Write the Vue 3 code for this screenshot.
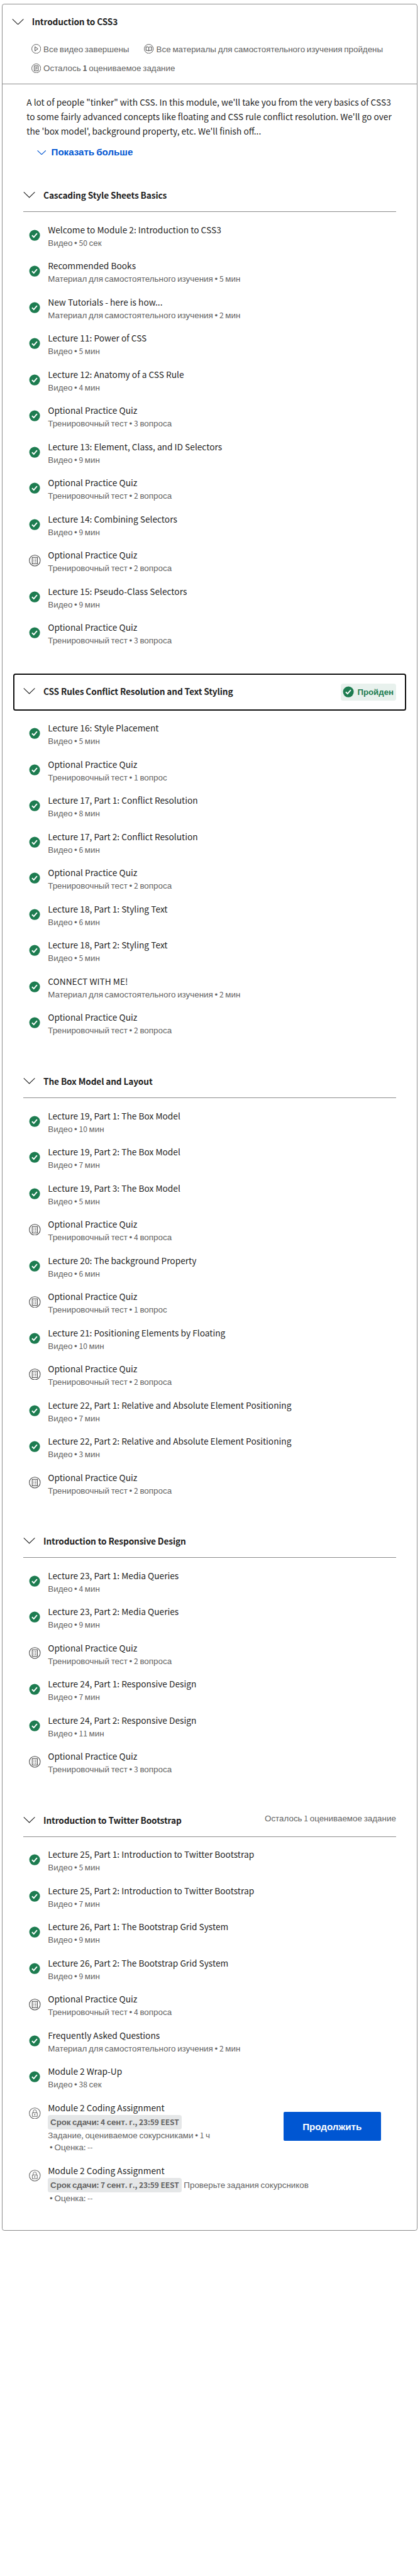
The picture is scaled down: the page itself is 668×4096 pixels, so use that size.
<script setup>
import { h } from 'vue'

const VIDEO = 'Видео'
const READING = 'Материал для самостоятельного изучения'
const QUIZ = 'Тренировочный тест'

const item = (title, kind, length, icon = 'done') => ({ title, meta: `${kind} • ${length}`, icon })
const quiz = (length, icon) => item('Optional Practice Quiz', QUIZ, length, icon)

const sections = [
  {
    title: 'Cascading Style Sheets Basics',
    items: [
      item('Welcome to Module 2: Introduction to CSS3', VIDEO, '50 сек'),
      item('Recommended Books', READING, '5 мин'),
      item('New Tutorials - here is how...', READING, '2 мин'),
      item('Lecture 11: Power of CSS', VIDEO, '5 мин'),
      item('Lecture 12: Anatomy of a CSS Rule', VIDEO, '4 мин'),
      quiz('3 вопроса'),
      item('Lecture 13: Element, Class, and ID Selectors', VIDEO, '9 мин'),
      quiz('2 вопроса'),
      item('Lecture 14: Combining Selectors', VIDEO, '9 мин'),
      quiz('2 вопроса', 'quiz'),
      item('Lecture 15: Pseudo-Class Selectors', VIDEO, '9 мин'),
      quiz('3 вопроса'),
    ],
  },
  {
    title: 'CSS Rules Conflict Resolution and Text Styling',
    focused: true,
    passed: true,
    items: [
      item('Lecture 16: Style Placement', VIDEO, '5 мин'),
      quiz('1 вопрос'),
      item('Lecture 17, Part 1: Conflict Resolution', VIDEO, '8 мин'),
      item('Lecture 17, Part 2: Conflict Resolution', VIDEO, '6 мин'),
      quiz('2 вопроса'),
      item('Lecture 18, Part 1: Styling Text', VIDEO, '6 мин'),
      item('Lecture 18, Part 2: Styling Text', VIDEO, '5 мин'),
      item('CONNECT WITH ME!', READING, '2 мин'),
      quiz('2 вопроса'),
    ],
  },
  {
    title: 'The Box Model and Layout',
    items: [
      item('Lecture 19, Part 1: The Box Model', VIDEO, '10 мин'),
      item('Lecture 19, Part 2: The Box Model', VIDEO, '7 мин'),
      item('Lecture 19, Part 3: The Box Model', VIDEO, '5 мин'),
      quiz('4 вопроса', 'quiz'),
      item('Lecture 20: The background Property', VIDEO, '6 мин'),
      quiz('1 вопрос', 'quiz'),
      item('Lecture 21: Positioning Elements by Floating', VIDEO, '10 мин'),
      quiz('2 вопроса', 'quiz'),
      item('Lecture 22, Part 1: Relative and Absolute Element Positioning', VIDEO, '7 мин'),
      item('Lecture 22, Part 2: Relative and Absolute Element Positioning', VIDEO, '3 мин'),
      quiz('2 вопроса', 'quiz'),
    ],
  },
  {
    title: 'Introduction to Responsive Design',
    items: [
      item('Lecture 23, Part 1: Media Queries', VIDEO, '4 мин'),
      item('Lecture 23, Part 2: Media Queries', VIDEO, '9 мин'),
      quiz('2 вопроса', 'quiz'),
      item('Lecture 24, Part 1: Responsive Design', VIDEO, '7 мин'),
      item('Lecture 24, Part 2: Responsive Design', VIDEO, '11 мин'),
      quiz('3 вопроса', 'quiz'),
    ],
  },
  {
    title: 'Introduction to Twitter Bootstrap',
    remaining: 'Осталось 1 оцениваемое задание',
    items: [
      item('Lecture 25, Part 1: Introduction to Twitter Bootstrap', VIDEO, '5 мин'),
      item('Lecture 25, Part 2: Introduction to Twitter Bootstrap', VIDEO, '7 мин'),
      item('Lecture 26, Part 1: The Bootstrap Grid System', VIDEO, '9 мин'),
      item('Lecture 26, Part 2: The Bootstrap Grid System', VIDEO, '9 мин'),
      quiz('4 вопроса', 'quiz'),
      item('Frequently Asked Questions', READING, '2 мин'),
      item('Module 2 Wrap-Up', VIDEO, '38 сек'),
      {
        title: 'Module 2 Coding Assignment',
        icon: 'lock',
        due: 'Срок сдачи: 4 сент. г., 23:59 EEST',
        meta: 'Задание, оцениваемое сокурсниками • 1 ч',
        grade: '• Оценка: --',
        action: 'Продолжить',
      },
      {
        title: 'Module 2 Coding Assignment',
        icon: 'lock',
        due: 'Срок сдачи: 7 сент. г., 23:59 EEST',
        dueNote: 'Проверьте задания сокурсников',
        grade: '• Оценка: --',
      },
    ],
  },
]

// Cyrillic runs and bullets are set in a different family from Latin, digits and punctuation.
const Txt = ({ t }) =>
  h('span', { class: 'txt' }, t.split(/([\u0400-\u04FF•]+)/).map((run, i) => (i % 2 ? h('span', { class: 'cyr' }, run) : run)))
Txt.props = ['t']

const svg = (box, size, cls, kids) => h('svg', { viewBox: box, width: size[0], height: size[1], class: cls, fill: 'none' }, kids)
const Chevron = ({ small }) =>
  svg('0 0 20 10', small ? [15, 7.5] : [20, 10], 'chevron', [
    h('path', { d: 'M.8.5 10 9.3 19.2.5', stroke: 'currentColor', 'stroke-width': small ? 1.5 : 1.1 }),
  ])
Chevron.props = { small: Boolean }

const ring = () => h('circle', { cx: 10, cy: 10, r: 9.3, stroke: 'currentColor', 'stroke-width': 1.1 })
const Icon = ({ name, size }) => {
  const p = (d, w = 1) => h('path', { d, stroke: 'currentColor', 'stroke-width': w })
  const shapes = {
    done: () => [
      h('circle', { cx: 10, cy: 10, r: 9.4, fill: '#1d7c50' }),
      h('path', { d: 'M5.4 10.2 8.5 13.3 14.2 6.6', stroke: '#fff', 'stroke-width': 2.1 }),
    ],
    quiz: () => [ring(), p('M5.6 4.6h8.8v10.800H5.6z', 1.1), p('M7.5 7.4h1.2M9.9 7.4h2.700M7.5 10h1.2M9.9 10h2.700M7.5 12.600h1.2M9.9 12.600h2.700', 0.9)],
    task: () => [ring(), p('M5.8 4.8h8.4v10.4H5.8z', 1.2), p('M8 7.8h4.2M8 10h4.2M8 12.2h2.4', 1.1)],
    lock: () => [ring(), p('M5.8 9h8.4v6.3H5.8zM7.3 9V6.6a2.7 2.7 0 0 1 5.4 0V9'), p('M10 11v2.4', 1.5)],
    play: () => [ring(), p('M7.4 5.6v8.8L13.4 10z', 1.3)],
    book: () => [ring(), p('M10 7C9.2 6.2 7.8 6 4.2 6.1v7.2c3.6-.1 5 .1 5.8 1 .8-.9 2.2-1.1 5.8-1V6.1C12.2 6 10.8 6.2 10 7zM10 7v7.2', 1.3)],
  }
  return svg('0 0 20 20', [size, size], 'icon icon-' + name, shapes[name]())
}
Icon.props = ['name', 'size']
</script>

<template>
  <main class="page">
    <article class="card">
      <header class="module-head">
        <h2 class="module-title"><Chevron /><Txt t="Introduction to CSS3" /></h2>
        <ul class="stats">
          <li><Icon name="play" :size="16" /><Txt t="Все видео завершены" /></li>
          <li><Icon name="book" :size="16" /><Txt t="Все материалы для самостоятельного изучения пройдены" /></li>
          <li class="strong-count"><Icon name="task" :size="16" /><Txt t="Осталось 1 оцениваемое задание" /></li>
        </ul>
      </header>

      <div class="intro">
        <p>
          <Txt t="A lot of people &quot;tinker&quot; with CSS. In this module, we'll take you from the very basics of CSS3" /><br />
          <Txt t="to some fairly advanced concepts like floating and CSS rule conflict resolution. We'll go over" /><br />
          <Txt t="the 'box model', background property, etc. We'll finish off..." />
        </p>
        <button class="more"><Chevron small /><Txt t="Показать больше" /></button>
      </div>

      <section v-for="s in sections" :key="s.title">
        <header class="section-head" :class="{ focused: s.focused }">
          <h3><Chevron /><Txt :t="s.title" /></h3>
          <span v-if="s.passed" class="passed"><Icon name="done" :size="19" /><Txt t="Пройден" /></span>
          <span v-if="s.remaining" class="remaining"><Txt :t="s.remaining" /></span>
        </header>
        <ul class="items">
          <li v-for="(it, i) in s.items" :key="i" class="item">
            <Icon :name="it.icon" :size="it.icon === 'done' ? 19 : 19.5" />
            <div class="body">
              <div class="title"><Txt :t="it.title" /></div>
              <div v-if="it.due" class="due-row">
                <span class="due"><Txt :t="it.due" /></span>
                <Txt v-if="it.dueNote" :t="it.dueNote" />
              </div>
              <div v-if="it.meta" class="meta"><Txt :t="it.meta" /></div>
              <div v-if="it.grade" class="meta grade"><Txt :t="it.grade" /></div>
            </div>
            <button v-if="it.action" class="action"><Txt :t="it.action" /></button>
          </li>
        </ul>
      </section>
    </article>
  </main>
</template>

<style>
body {
  background: #fff;
}
</style>

<style scoped>
.page {
  zoom: 0.9587;
  box-sizing: border-box;
  width: 696px;
  height: 4272px;
  padding: 6px 3px 0 3px;
  overflow: hidden;
  font-family: "Noto Sans CJK SC", "Liberation Sans", sans-serif;
  font-size: 12.6px;
  color: #1f1f1f;
}
.page :deep(.txt) {
  white-space: pre;
}
.page :deep(.cyr) {
  font-family: "Liberation Sans", Arial, sans-serif;
  font-size: 1.11em;
  line-height: 0;
}
.page :deep(svg) {
  display: block;
  flex: none;
}
ul,
h2,
h3,
p {
  margin: 0;
  padding: 0;
  list-style: none;
  font-size: inherit;
}
button {
  border: 0;
  padding: 0;
  background: none;
  font: inherit;
  font-weight: 700;
}
.card {
  box-sizing: border-box;
  height: 3694px;
  border: 1px solid #8c8c8c;
  border-radius: 4px;
}
.module-head {
  box-sizing: border-box;
  height: 133px;
  border-bottom: 1px solid #8c8c8c;
  padding: 17px 16px 0;
}
.module-title,
.section-head h3 {
  display: flex;
  align-items: center;
  gap: 13px;
  height: 24px;
  line-height: 24px;
  font-size: 14.3px;
  letter-spacing: -0.14px;
}
.section-head h3 {
  height: 25px;
}
.section-head h3 :deep(.txt) {
  padding-top: 1px;
}
.stats {
  display: flex;
  flex-wrap: wrap;
  column-gap: 25px;
  padding: 17px 0 0 32px;
  color: #636363;
}
.stats li {
  display: flex;
  align-items: center;
  gap: 4px;
  height: 32px;
}
.stats :deep(.icon) {
  color: #444;
}
.stats :deep(.txt) {
  padding-bottom: 1px;
}
.strong-count :deep(.txt) {
  font-weight: 700;
}
.strong-count :deep(.cyr) {
  font-weight: 400;
}
.intro {
  height: 126px;
  padding: 17px 0 0 40px;
  box-sizing: border-box;
  font-size: 14.33px;
  line-height: 24px;
}
.more {
  display: flex;
  align-items: center;
  gap: 9px;
  margin: 12px 0 0 17px;
  height: 24px;
  font-size: 14.2px;
  color: #0056d2;
}
.more :deep(.txt) {
  padding-bottom: 2px;
}
.section-head {
  box-sizing: border-box;
  display: flex;
  justify-content: space-between;
  height: 58px;
  margin: 28px 35px 0;
  border-bottom: 1px solid #8c8c8c;
  padding-top: 17px;
}
.section-head.focused {
  height: 62px;
  margin: 28px 18px 0;
  border: 2.1px solid #0f0f0f;
  border-radius: 4px;
  padding: 14.9px 14.9px 0;
}
.passed {
  box-sizing: border-box;
  display: flex;
  align-items: center;
  gap: 5px;
  height: 28px;
  padding: 0 4px;
  border-radius: 4px;
  background: #e8f1ed;
  color: #1d7c50;
  font-size: 12.45px;
  font-weight: 700;
}
.passed :deep(.txt) {
  padding-bottom: 1px;
}
.remaining {
  color: #636363;
  line-height: 18.5px;
}
.items {
  display: flow-root;
  padding-top: 17px;
}
.item {
  display: flex;
  margin-bottom: 16px;
  padding-left: 44px;
}
.item :deep(.icon) {
  margin: 11.5px 12.5px 0 0;
}
.item :deep(.icon-quiz),
.item :deep(.icon-lock) {
  margin: 11.2px 12.2px 0 -0.2px;
  color: #444;
}
.item :deep(.icon-lock) {
  color: #636363;
}
.title {
  height: 24px;
  font-size: 14.33px;
  line-height: 23.5px;
}
.body {
  flex: 1;
}
.meta {
  height: 20px;
  line-height: 18.7px;
  color: #636363;
}
.grade {
  padding-left: 3px;
}
.due-row {
  display: flex;
  gap: 4px;
  height: 24px;
  line-height: 23px;
  color: #636363;
}
.due {
  padding: 0 4px;
  border-radius: 4px;
  background: #e5e7e8;
  font-weight: 700;
  letter-spacing: -0.11px;
}
.action {
  width: 162px;
  height: 48px;
  margin: 19px 60px 0 0;
  padding-bottom: 0.5px;
  border-radius: 2px;
  background: #0056d2;
  color: #fff;
  font-size: 14.25px;
}
</style>
